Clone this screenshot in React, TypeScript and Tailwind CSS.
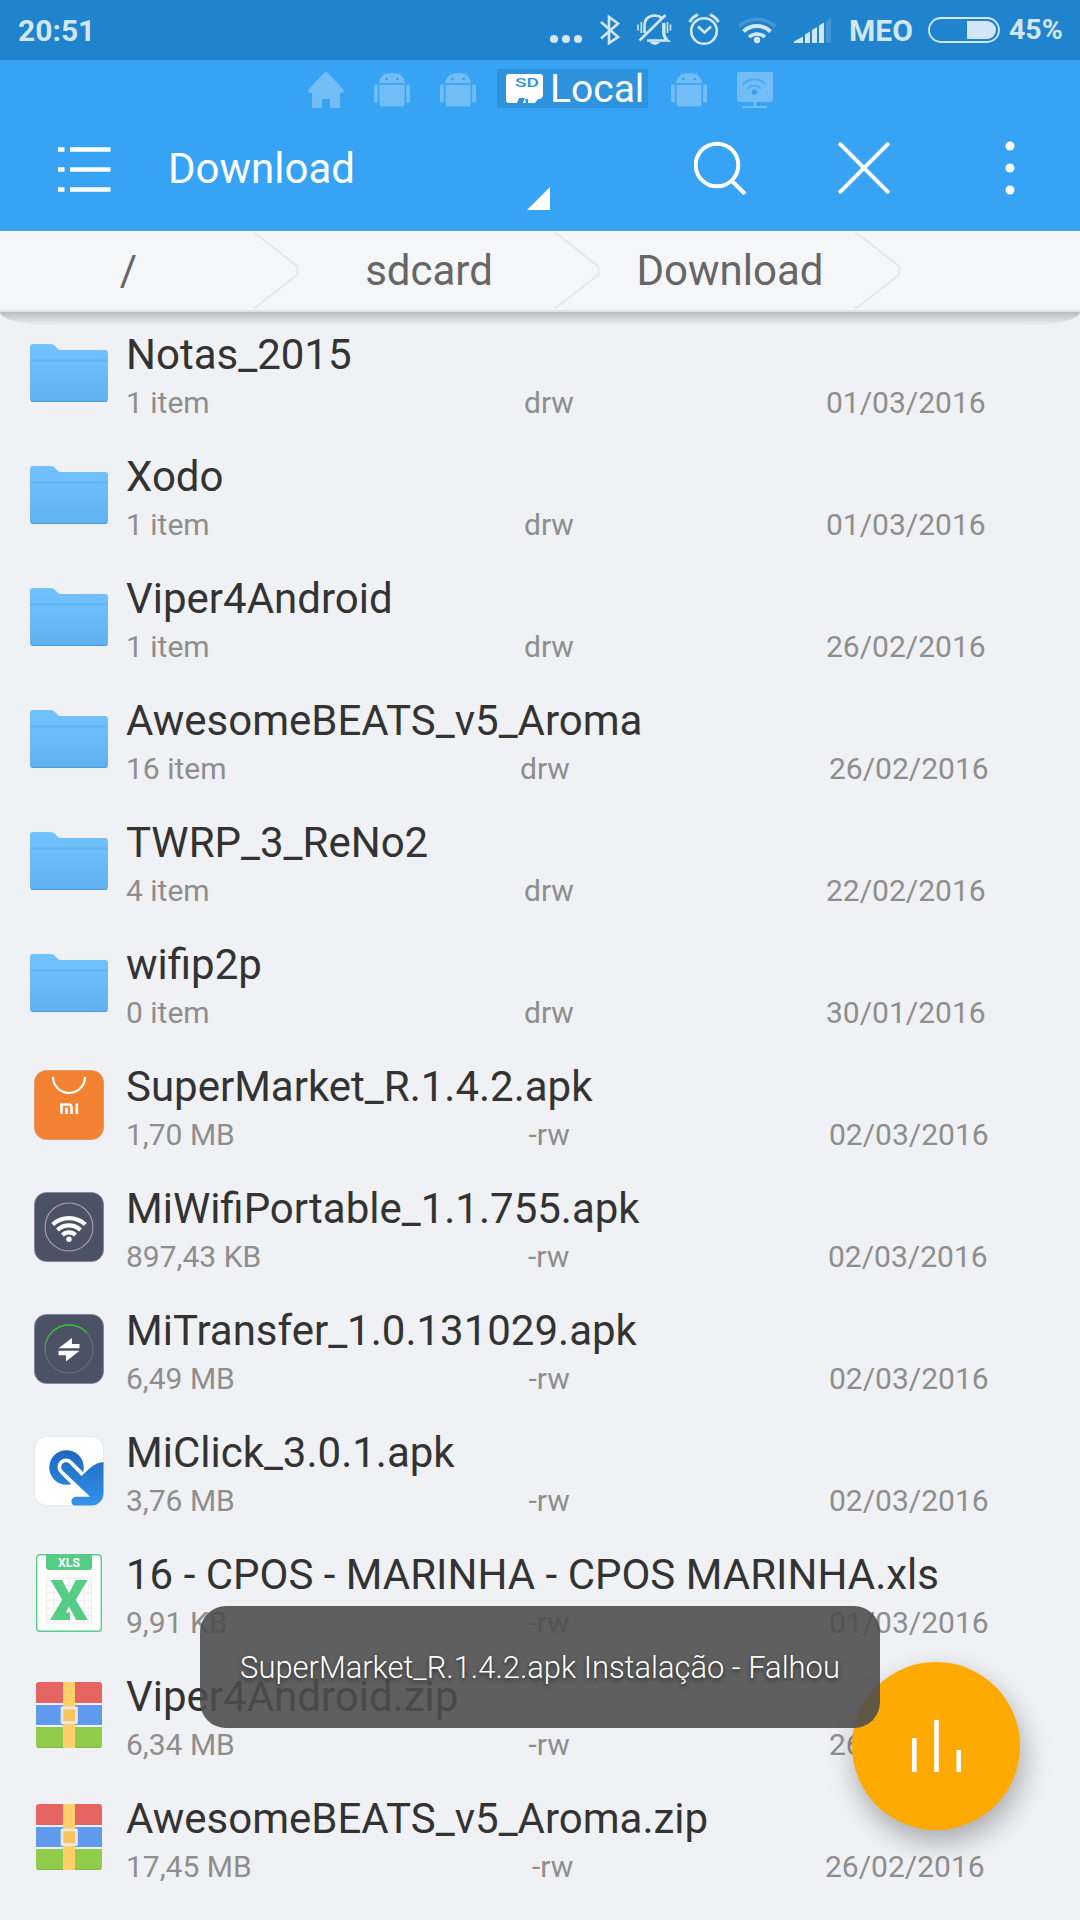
import React from 'react';

type FileItem = {
    name: string;
    size: string;
    perm: string;
    date: string;
    icon: React.ReactNode;
    permCol?: string;
    dateCol?: string;
};

const FolderIcon = () => (
    <svg width="78" height="59" viewBox="0 0 78 59">
        <defs>
            <linearGradient id="folder" x1="0" y1="0" x2="0" y2="1">
                <stop offset="0" stopColor="#72c2ff" />
                <stop offset="0.35" stopColor="#6dbdfb" />
                <stop offset="1" stopColor="#5fb2ef" />
            </linearGradient>
        </defs>
        <path d="M0 3a3 3 0 0 1 3-3h18q2 0 3.500 1.500l3 3Q29 6 31 6h44a3 3 0 0 1 3 3v46a3 3 0 0 1-3 3H3a3 3 0 0 1-3-3z" fill="url(#folder)" />
        <path d="M0 16.500h78" stroke="#5fb4f4" strokeWidth="2" />
        <path d="M1.500 57.300h75" stroke="#48a0e0" strokeWidth="1.300" />
    </svg>
);

const MarketIcon = () => (
    <svg width="70" height="70" viewBox="0 0 70 70">
        <rect x="0.500" y="0.500" width="69" height="69" rx="12" fill="#f28231" stroke="#e2905a" strokeWidth="0.800" />
        <path d="M19 7a16 16 0 0 0 32 0" fill="none" stroke="#fff" strokeWidth="2.200" />
        <g fill="none" stroke="#fff" strokeWidth="2.600">
            <path d="M27.500 44V34.500h7q3 0 3 3V44M32.500 37.500V44M42.800 33.200V44" />
        </g>
    </svg>
);

const WifiAppIcon = () => (
    <svg width="70" height="70" viewBox="0 0 70 70">
        <rect x="0.500" y="0.500" width="69" height="69" rx="12" fill="#4c5266" stroke="#7c8090" strokeWidth="0.800" />
        <circle cx="35" cy="35" r="24" fill="none" stroke="#a2a5b0" strokeWidth="1.100" />
        <g fill="none" stroke="#fff" strokeWidth="4.200">
            <path d="M18.700 32.500a24 24 0 0 1 32.600 0" />
            <path d="M23.500 38a16.500 16.500 0 0 1 23 0" />
            <path d="M28.500 43a9.500 9.500 0 0 1 13 0" />
        </g>
        <circle cx="35" cy="47.300" r="2.700" fill="#fff" />
    </svg>
);

const TransferIcon = () => (
    <svg width="70" height="70" viewBox="0 0 70 70">
        <defs>
            <linearGradient id="ring" x1="0" y1="0" x2="0" y2="1">
                <stop offset="0" stopColor="#2ad32a" />
                <stop offset="1" stopColor="#5c7570" />
            </linearGradient>
        </defs>
        <rect x="0.500" y="0.500" width="69" height="69" rx="12" fill="#4c5266" stroke="#7c8090" strokeWidth="0.800" />
        <circle cx="35" cy="35" r="24" fill="none" stroke="#6c7182" strokeWidth="1" />
        <path d="M11.400 39A24 24 0 0 1 53 19" fill="none" stroke="url(#ring)" strokeWidth="1.400" />
        <path d="M24.500 34.300L38 24v6h7.500v4.300zM45.500 36.700L32 47.500v-6.300h-7.500v-4.500z" fill="#fff" />
    </svg>
);

const ClickIcon = () => (
    <svg width="70" height="70" viewBox="0 0 70 70">
        <defs>
            <linearGradient id="click" gradientUnits="userSpaceOnUse" x1="0" y1="14" x2="0" y2="70">
                <stop offset="0" stopColor="#1e66bf" />
                <stop offset="1" stopColor="#3494ec" />
            </linearGradient>
            <clipPath id="clickClip">
                <rect x="0.500" y="0.500" width="69" height="69" rx="12" />
            </clipPath>
        </defs>
        <rect x="0.500" y="0.500" width="69" height="69" rx="12" fill="#fff" stroke="#e4e5e8" strokeWidth="0.800" />
        <g clipPath="url(#clickClip)">
            <circle cx="32.500" cy="31.500" r="17.300" fill="url(#click)" />
            <path d="M32 31L62 61" stroke="#fff" strokeWidth="17" strokeLinecap="round" />
            <path d="M28.600 34.400a4.800 4.800 0 0 1 6.800-6.800L47.500 40 56 32Q63 26 70 26v44H42a4.600 4.600 0 0 1 0-9.200h14z" fill="url(#click)" />
        </g>
    </svg>
);

const XlsIcon = () => (
    <svg width="66" height="78" viewBox="0 0 66 78">
        <rect x="0.700" y="0.700" width="64.600" height="76.600" rx="3" fill="#fff" stroke="#55cd86" strokeWidth="1.400" />
        <path d="M10 0h46v13a3 3 0 0 1-3 3H13a3 3 0 0 1-3-3z" fill="#55cd86" />
        <text x="33" y="12.800" textAnchor="middle" fontSize="13.500" fontWeight="700" fill="#fff" textLength="22" lengthAdjust="spacingAndGlyphs">XLS</text>
        <g fill="none" stroke="#efefef" strokeWidth="1.300">
            <rect x="10.500" y="24" width="45" height="45" />
            <path d="M18 24v45M25.500 24v45M33 24v45M40.500 24v45M48 24v45M10.500 31.500h45M10.500 39h45M10.500 46.500h45M10.500 54h45M10.500 61.500h45" />
        </g>
        <text x="33" y="66" textAnchor="middle" fontSize="55" fontWeight="900" fill="#55cd86" textLength="38" lengthAdjust="spacingAndGlyphs">X</text>
        <path d="M24 58.500h10V66H24z" fill="#55cd86" />
    </svg>
);

const ZipIcon = () => (
    <svg width="66" height="66" viewBox="0 0 66 66">
        <path d="M0 21V3a3 3 0 0 1 3-3h60a3 3 0 0 1 3 3v18z" fill="#e56360" />
        <path d="M0 23h66v20H0z" fill="#5f9bec" />
        <path d="M0 45h66v18a3 3 0 0 1-3 3H3a3 3 0 0 1-3-3z" fill="#91cc4b" />
        <path d="M1 65.300h64" stroke="#7fb83f" />
        <path d="M27 0h12v66H27z" fill="#ffd06a" />
        <rect x="26" y="26" width="14.500" height="14.500" fill="#fac45c" stroke="#e9ebec" strokeWidth="2.600" />
    </svg>
);

const files: FileItem[] = [
    { name: 'Notas_2015', size: '1 item', perm: 'drw', date: '01/03/2016', icon: <FolderIcon /> },
    { name: 'Xodo', size: '1 item', perm: 'drw', date: '01/03/2016', icon: <FolderIcon /> },
    { name: 'Viper4Android', size: '1 item', perm: 'drw', date: '26/02/2016', icon: <FolderIcon /> },
    { name: 'AwesomeBEATS_v5_Aroma', size: '16 item', perm: 'drw', date: '26/02/2016', icon: <FolderIcon />, permCol: 'w-[394px]', dateCol: 'w-[309px]' },
    { name: 'TWRP_3_ReNo2', size: '4 item', perm: 'drw', date: '22/02/2016', icon: <FolderIcon /> },
    { name: 'wifip2p', size: '0 item', perm: 'drw', date: '30/01/2016', icon: <FolderIcon /> },
    { name: 'SuperMarket_R.1.4.2.apk', size: '1,70 MB', perm: '-rw', date: '02/03/2016', icon: <MarketIcon />, permCol: 'w-[402.500px]', dateCol: 'w-[300.500px]' },
    { name: 'MiWifiPortable_1.1.755.apk', size: '897,43 KB', perm: '-rw', date: '02/03/2016', icon: <WifiAppIcon />, permCol: 'w-[402px]', dateCol: 'w-[300px]' },
    { name: 'MiTransfer_1.0.131029.apk', size: '6,49 MB', perm: '-rw', date: '02/03/2016', icon: <TransferIcon />, permCol: 'w-[402.500px]', dateCol: 'w-[300.500px]' },
    { name: 'MiClick_3.0.1.apk', size: '3,76 MB', perm: '-rw', date: '02/03/2016', icon: <ClickIcon />, permCol: 'w-[402.500px]', dateCol: 'w-[300.500px]' },
    { name: '16 - CPOS - MARINHA - CPOS MARINHA.xls', size: '9,91 KB', perm: '-rw', date: '01/03/2016', icon: <XlsIcon />, permCol: 'w-[402.500px]', dateCol: 'w-[300.500px]' },
    { name: 'Viper4Android.zip', size: '6,34 MB', perm: '-rw', date: '26/02/2016', icon: <ZipIcon />, permCol: 'w-[402.500px]', dateCol: 'w-[300.500px]' },
    { name: 'AwesomeBEATS_v5_Aroma.zip', size: '17,45 MB', perm: '-rw', date: '26/02/2016', icon: <ZipIcon />, permCol: 'w-[406px]', dateCol: 'w-[293px]' },
];

const StatusBar = () => (
    <div className="flex h-[60px] items-center bg-[#2083cd] pl-[18px] text-[30px] font-bold text-[#d2e6f5]">
        <span className="w-[532px]">20:51</span>
        <svg width="28" height="60" viewBox="550 0 28 60" fill="currentColor" className="overflow-visible">
            <circle cx="554" cy="39" r="4.100" />
            <circle cx="566" cy="39" r="4.100" />
            <circle cx="578" cy="39" r="4.100" />
        </svg>
        <svg width="254" height="60" viewBox="578 0 254 60" fill="none" stroke="currentColor" strokeWidth="2.600">
            {/* bluetooth */}
            <path d="M601 22L618 37l-9 6V17l9 6.500L601 38.500" />
            {/* muted bell */}
            <path d="M644.500 33V26q0-10 10-10.500 4.500 0 7 2.500M647 40.500h20.500q-4-3-4-8V23" />
            <path d="M639.500 40.500L665.500 15" />
            <path d="M664 23v10q0 4 3 7" strokeWidth="3" />
            <path d="M638 24.500v6M641.300 22v11M667.500 22v11M670.500 24.500v6" strokeWidth="1.600" />
            <path d="M649.500 42h10.500q-2 3-5.200 3t-5.300-3z" fill="currentColor" stroke="none" />
            {/* alarm */}
            <circle cx="704" cy="31" r="12.800" />
            <path d="M698 26.500l6.500 6 6.500-6" />
            <path d="M689.500 22q3-5 8.500-7.500M718.500 22q-3-5-8.500-7.500" strokeWidth="3" />
            {/* wifi */}
            <path d="M738.800 26.500a26.500 26.500 0 0 1 36.400 0" strokeWidth="3.400" opacity="0.200" />
            <path d="M743.500 31.500a19.500 19.500 0 0 1 27 0" strokeWidth="4" />
            <path d="M749 37a12 12 0 0 1 16 0" strokeWidth="3.600" />
            <circle cx="757" cy="40" r="3.200" fill="currentColor" stroke="none" />
            {/* signal */}
            <g fill="currentColor" stroke="none">
                <path d="M794 43v-1.500l9-5V43zM805 43v-8.500l5-3V43zM812 43V30l5-3v16zM819 43V25.500l5-3V43z" />
                <path d="M826 43V21l5-3v25z" opacity="0.200" />
            </g>
        </svg>
        <span className="ml-[17px] w-[79px]">MEO</span>
        <svg width="72" height="26" viewBox="0 0 72 26">
            <rect x="1" y="1" width="70" height="24" rx="12" fill="none" stroke="currentColor" strokeWidth="1.800" />
            <path d="M39 4h20a9 9 0 0 1 0 18H39z" fill="currentColor" />
        </svg>
        <span className="ml-[9px] pt-[1px] text-[28.500px]">45%</span>
    </div>
);

const AndroidIcon = () => (
    <svg width="36" height="36" viewBox="0 0 36 36" fill="#73bdf7">
        <path d="M5.500 11.500Q6 5 11.500 2.800L9.500 0.500M30.500 11.500Q30 5 24.500 2.800L26.500 0.500" fill="none" stroke="#73bdf7" strokeWidth="1" />
        <path fillRule="evenodd" d="M5.500 11Q6.500 1 18 1t12.500 10zM12.500 5.500a1.500 1.500 0 1 0 .01 3 1.500 1.500 0 0 0 0-3zM23.500 5.500a1.500 1.500 0 1 0 .01 3 1.500 1.500 0 0 0 0-3z" />
        <path d="M5.500 12.800h25v19.700a2 2 0 0 1-2 2h-21a2 2 0 0 1-2-2z" />
        <rect x="0" y="12.500" width="3.800" height="18" rx="1.200" />
        <rect x="32.200" y="12.500" width="3.800" height="18" rx="1.200" />
    </svg>
);

const LocationTabs = () => (
    <div className="flex h-[48px] items-end pl-[308px]">
        <svg width="36" height="36" viewBox="0 0 36 36" fill="#73bdf7">
            <path d="M18 0q1 0 2 1l15.500 16.500q1 3-1.500 3.500h-2v15H22v-9h-8v9H4V21H2q-2.500-.5-1.500-3.500L16 1q1-1 2-1z" />
        </svg>
        <div className="ml-[30px]"><AndroidIcon /></div>
        <div className="ml-[30px]"><AndroidIcon /></div>
        <div className="ml-[21px] flex h-[39px] w-[151px] items-center bg-[#2e92dd] pl-[9px] text-[39px] text-white">
            <svg width="37" height="30" viewBox="0 0 37 30">
                <path d="M0 3a3 3 0 0 1 3-3h31a3 3 0 0 1 3 3v17q0 4-3 5h-2l-3 4h-7v-4h-3L20 29h-3l2-5h-6l-2 5H3a3 3 0 0 1-3-3z" fill="#fff" />
                <text x="21" y="13" textAnchor="middle" fontSize="12.500" fontWeight="500" fill="#2e92dd" textLength="24" lengthAdjust="spacingAndGlyphs">SD</text>
            </svg>
            <span className="ml-[7px] pt-[2px]">Local</span>
        </div>
        <div className="ml-[23px]"><AndroidIcon /></div>
        <svg className="ml-[30px]" width="36" height="36" viewBox="0 0 36 36">
            <path d="M0 2a2 2 0 0 1 2-2h32a2 2 0 0 1 2 2v26a2 2 0 0 1-2 2H19.500v4H30v2H5.500v-2h11v-4H2a2 2 0 0 1-2-2z" fill="#73bdf7" />
            <g fill="none" stroke="#4fabf3" strokeWidth="2.200">
                <path d="M6 12.500a15 15 0 0 1 22.500 0M10.500 16.800a9 9 0 0 1 13.500 0" />
            </g>
            <circle cx="17.300" cy="20" r="2.600" fill="#36a3f5" />
        </svg>
    </div>
);

const Toolbar = () => (
    <div className="flex h-[123px] items-center pl-[58px] text-white">
        <svg width="53" height="46" viewBox="0 0 53 46" stroke="#fff" strokeWidth="4.400">
            <path d="M0 2.500h6.500M12 2.500h40.500M0 22.500h6.500M12 22.500h40.500M0 42.500h6.500M12 42.500h40.500" />
        </svg>
        <span className="ml-[57px] w-[359px] text-[42px] leading-[50px] pb-[1px]">Download</span>
        <svg width="23" height="23" viewBox="0 0 23 23" className="mt-[58px]">
            <path d="M23 0v23H0z" fill="#fff" />
        </svg>
        <svg className="ml-[144px] mb-[4px]" width="53" height="54" viewBox="0 0 53 54" fill="none" stroke="#fff" strokeWidth="4">
            <circle cx="23" cy="24" r="21.300" />
            <path d="M38 40l13 13" />
        </svg>
        <svg className="ml-[91px] mb-[3px]" width="52" height="52" viewBox="0 0 52 52" stroke="#fff" strokeWidth="4">
            <path d="M1 1l50 50M51 1L1 51" />
        </svg>
        <svg className="ml-[115px] mb-[3px]" width="10" height="54" viewBox="0 0 10 54" fill="#fff">
            <circle cx="5" cy="5" r="4.500" />
            <circle cx="5" cy="27" r="4.500" />
            <circle cx="5" cy="49" r="4.500" />
        </svg>
    </div>
);

const Breadcrumbs = () => (
    <div className="relative z-10">
        <div className="flex h-[81px] border-b-2 border-[#e2e3e5] bg-[#f5f6f8] text-[42px] text-[#666]">
            {['/', 'sdcard', 'Download'].map((crumb, i) => (
                <div key={crumb} className={i === 0 ? 'flex w-[299px]' : 'flex w-[301px]'}>
                    <div className={i === 0 ? 'flex w-[253px] items-center justify-center pl-[4px]' : 'flex w-[255px] items-center justify-center pl-[5px]'}>
                        {crumb}
                    </div>
                    <svg width="46" height="79" viewBox="0 0 46 79" fill="none" stroke="#e6e7e9" strokeWidth="2">
                        <path d="M-3 1.500q4 0 8 3L44.500 35.500v8L5 74.500q-4 3-8 3" />
                    </svg>
                </div>
            ))}
        </div>
        <div className="absolute left-0 right-0 top-[81px] h-[14px] rounded-b-[60px_14px] bg-gradient-to-b from-[#bcbdbf] to-[#f0f1f4]" />
    </div>
);

const FileRow = ({ file }: { file: FileItem }) => (
    <div className="flex h-[122px]">
        <div className="flex w-[126px] items-center justify-center pl-[12px]">{file.icon}</div>
        <div className="pt-[18px]">
            <div className="text-[42px] leading-[50px] whitespace-nowrap text-[#333]">{file.name}</div>
            <div className="mt-[5px] flex text-[30px] leading-[36px] text-[#8e8e8e]">
                <span className={file.permCol ?? 'w-[398px]'}>{file.size}</span>
                <span className={file.dateCol ?? 'w-[302px]'}>{file.perm}</span>
                <span>{file.date}</span>
            </div>
        </div>
    </div>
);

const App = () => {
    return (
        <div className="relative h-[1920px] w-[1080px] overflow-hidden bg-[#f0f1f4] font-['Roboto',sans-serif]">
            <StatusBar />
            <div className="bg-[#36a3f5]">
                <LocationTabs />
                <Toolbar />
            </div>
            <Breadcrumbs />
            <div>
                {files.map((file) => (
                    <FileRow key={file.name} file={file} />
                ))}
            </div>
            <button className="absolute top-[1662px] left-[852px] flex h-[168px] w-[168px] items-center justify-center rounded-full bg-[#ffaa03] shadow-[3px_12px_28px_rgba(0,0,0,0.3)]">
                <svg width="49" height="52" viewBox="0 0 49 52" fill="#fff">
                    <path d="M0 18h4.600v34H0zM22.200 0h4.600v52h-4.600zM44.400 30H49v22h-4.600z" />
                </svg>
            </button>
            <div className="absolute top-[1606px] left-[200px] flex h-[122px] w-[680px] items-center justify-center rounded-[26px] bg-[#4c4c4c]/89 pt-[3px] text-[30.900px] font-light text-white [text-shadow:0_2px_4px_rgba(0,0,0,0.6)]">
                SuperMarket_R.1.4.2.apk Instalação - Falhou
            </div>
        </div>
    );
};

export default App;
